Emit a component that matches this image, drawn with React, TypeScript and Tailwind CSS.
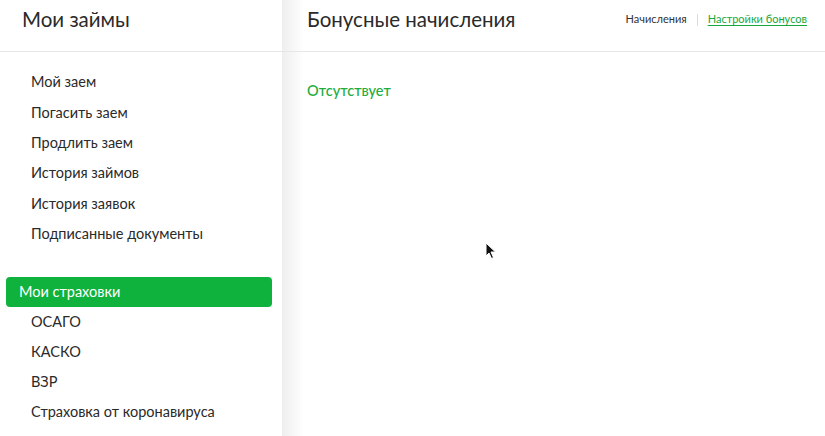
const loanLinks = [
  "Мой заем",
  "Погасить заем",
  "Продлить заем",
  "История займов",
  "История заявок",
  "Подписанные документы",
];

const insuranceLinks = ["ОСАГО", "КАСКО", "ВЗР", "Страховка от коронавируса"];

const Cursor = () => (
  <svg width="12" height="18" viewBox="0 0 12 18" className="absolute left-[485px] top-[242px]">
    <path d="M1 1 L1 14 L4 11 L6.5 16.5 L8.5 15.5 L6 10 L10.5 10 Z" fill="#111" stroke="#fff" strokeWidth="1" />
  </svg>
);

export default function App() {
  return (
    <div className="relative w-[825px] h-[436px] overflow-hidden bg-white font-['Lato',sans-serif] text-[#222]">
      <div className="flex h-full">
        {/* sidebar */}
        <aside className="w-[282px] shrink-0 flex flex-col bg-white">
          <div className="h-[52px] border-b border-[#e6e6e6] flex items-center pl-[22px] pb-[12px]">
            <h2 className="text-[20.5px] leading-none text-[#2a2a2a]">Мои займы</h2>
          </div>
          <nav className="pt-[15px] flex flex-col">
            {loanLinks.map((l) => (
              <a key={l} className="h-[30.4px] flex items-center pl-[31px] text-[14.5px] text-[#2a2a2a]">
                {l}
              </a>
            ))}
          </nav>
          <div className="mt-[28px] px-[6px] pr-[10px]">
            <div className="h-[30px] rounded-[4px] bg-[#0fb23c] flex items-center pl-[13px] text-[14.5px] text-white">
              Мои страховки
            </div>
          </div>
          <nav className="flex flex-col">
            {insuranceLinks.map((l) => (
              <a key={l} className="h-[30px] flex items-center pl-[31px] text-[14.5px] text-[#2a2a2a]">
                {l}
              </a>
            ))}
          </nav>
        </aside>

        {/* main */}
        <main className="flex-1 flex flex-col bg-gradient-to-r from-[#eeeeee] via-white via-[4%] to-white">
          <header className="h-[52px] border-b border-[#e6e6e6] flex items-center pl-[25px] pr-[18px] pb-[12px]">
            <h1 className="text-[20.5px] leading-none text-[#2a2a2a]">Бонусные начисления</h1>
            <div className="ml-auto flex items-center text-[11px]">
              <span className="text-[#333]">Начисления</span>
              <span className="mx-[10px] h-[12px] w-px bg-[#dcdcdc]" />
              <span className="text-[#16a83c] underline underline-offset-2 decoration-[#16a83c]">Настройки бонусов</span>
            </div>
          </header>
          <div className="pl-[25px] pt-[28px]">
            <p className="text-[14.5px] font-medium text-[#22ac3e]">Отсутствует</p>
          </div>
        </main>
      </div>
      <Cursor />
    </div>
  );
}
